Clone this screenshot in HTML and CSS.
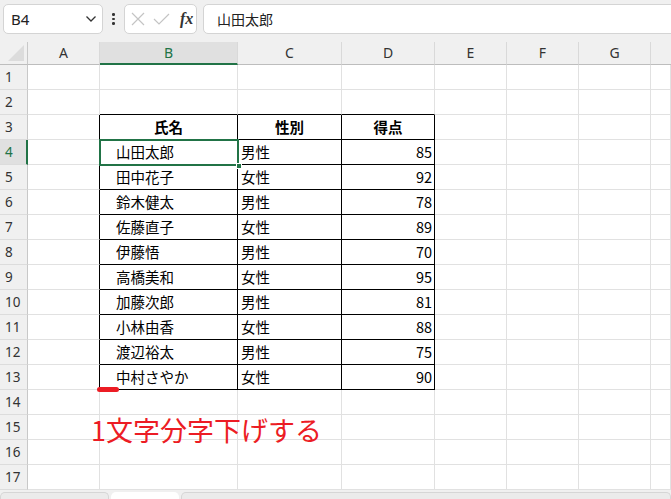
FILE: index.html
```html
<!DOCTYPE html>
<html lang="ja">
<head>
    <meta charset="UTF-8">
    <title>Book1 - Excel</title>
    <link rel="stylesheet" href="styles.css">
</head>
<body>
    <div class="formula-bar">
        <div class="name-box">
            <span>B4</span>
            <svg class="chevron" width="12" height="8" viewBox="0 0 12 8"><path d="M1.5 1.5 L6 6 L10.5 1.5" fill="none" stroke="#333" stroke-width="1.3"/></svg>
        </div>
        <div class="dots"><i></i><i></i><i></i></div>
        <div class="fx-box">
            <svg width="14" height="14" viewBox="0 0 14 14"><path d="M1 1 L13 13 M13 1 L1 13" stroke="#c4c4c4" stroke-width="1.2"/></svg>
            <svg width="17" height="14" viewBox="0 0 17 14"><path d="M1 7 L6 12 L16 2" fill="none" stroke="#c4c4c4" stroke-width="1.2"/></svg>
            <span class="fx">fx</span>
        </div>
        <div class="formula-input">山田太郎</div>
    </div>

    <div class="sheet">
        <div class="corner"><span class="tri"></span></div>
        <div class="col-head">A</div>
        <div class="col-head active">B</div>
        <div class="col-head">C</div>
        <div class="col-head">D</div>
        <div class="col-head">E</div>
        <div class="col-head">F</div>
        <div class="col-head">G</div>
        <div class="col-head last"></div>

        <div class="row-head">1</div><div class="c"></div><div class="c"></div><div class="c"></div><div class="c"></div><div class="c"></div><div class="c"></div><div class="c"></div><div class="c"></div>
        <div class="row-head">2</div><div class="c"></div><div class="c above"></div><div class="c above"></div><div class="c above"></div><div class="c"></div><div class="c"></div><div class="c"></div><div class="c"></div>

        <div class="row-head">3</div><div class="c before"></div><div class="c t th">氏名</div><div class="c t th">性別</div><div class="c t th">得点</div><div class="c"></div><div class="c"></div><div class="c"></div><div class="c"></div>
        <div class="row-head active">4</div><div class="c before"></div><div class="c t name">山田太郎</div><div class="c t">男性</div><div class="c t num">85</div><div class="c"></div><div class="c"></div><div class="c"></div><div class="c"></div>
        <div class="row-head">5</div><div class="c before"></div><div class="c t name">田中花子</div><div class="c t">女性</div><div class="c t num">92</div><div class="c"></div><div class="c"></div><div class="c"></div><div class="c"></div>
        <div class="row-head">6</div><div class="c before"></div><div class="c t name">鈴木健太</div><div class="c t">男性</div><div class="c t num">78</div><div class="c"></div><div class="c"></div><div class="c"></div><div class="c"></div>
        <div class="row-head">7</div><div class="c before"></div><div class="c t name">佐藤直子</div><div class="c t">女性</div><div class="c t num">89</div><div class="c"></div><div class="c"></div><div class="c"></div><div class="c"></div>
        <div class="row-head">8</div><div class="c before"></div><div class="c t name">伊藤悟</div><div class="c t">男性</div><div class="c t num">70</div><div class="c"></div><div class="c"></div><div class="c"></div><div class="c"></div>
        <div class="row-head">9</div><div class="c before"></div><div class="c t name">高橋美和</div><div class="c t">女性</div><div class="c t num">95</div><div class="c"></div><div class="c"></div><div class="c"></div><div class="c"></div>
        <div class="row-head">10</div><div class="c before"></div><div class="c t name">加藤次郎</div><div class="c t">男性</div><div class="c t num">81</div><div class="c"></div><div class="c"></div><div class="c"></div><div class="c"></div>
        <div class="row-head">11</div><div class="c before"></div><div class="c t name">小林由香</div><div class="c t">女性</div><div class="c t num">88</div><div class="c"></div><div class="c"></div><div class="c"></div><div class="c"></div>
        <div class="row-head">12</div><div class="c before"></div><div class="c t name">渡辺裕太</div><div class="c t">男性</div><div class="c t num">75</div><div class="c"></div><div class="c"></div><div class="c"></div><div class="c"></div>
        <div class="row-head">13</div><div class="c before"></div><div class="c t name">中村さやか</div><div class="c t">女性</div><div class="c t num">90</div><div class="c"></div><div class="c"></div><div class="c"></div><div class="c"></div>

        <div class="row-head">14</div><div class="c"></div><div class="c"></div><div class="c"></div><div class="c"></div><div class="c"></div><div class="c"></div><div class="c"></div><div class="c"></div>
        <div class="row-head">15</div><div class="c"></div><div class="c"></div><div class="c"></div><div class="c"></div><div class="c"></div><div class="c"></div><div class="c"></div><div class="c"></div>
        <div class="row-head">16</div><div class="c"></div><div class="c"></div><div class="c"></div><div class="c"></div><div class="c"></div><div class="c"></div><div class="c"></div><div class="c"></div>
        <div class="row-head">17</div><div class="c"></div><div class="c"></div><div class="c"></div><div class="c"></div><div class="c"></div><div class="c"></div><div class="c"></div><div class="c"></div>

        <!-- overlays -->
        <div class="selection"><span class="handle"></span></div>
        <div class="indent-mark"></div>
        <div class="note">1文字分字下げする</div>
    </div>

    <div class="tab-bar">
        <div class="tab-nav"></div>
        <div class="tab"></div>
        <div class="tab-rest"></div>
    </div>
</body>
</html>
```

FILE: styles.css
```css
* {
    box-sizing: border-box;
}

body {
    margin: 0;
    width: 671px;
    height: 499px;
    overflow: hidden;
    background-color: #f0f0f0;
    font-family: "Noto Sans CJK JP", "Noto Sans", sans-serif;
    color: #000;
}

/* formula bar */
.formula-bar {
    display: flex;
    align-items: center;
    height: 42px;
    padding: 4px 0 8px 3px;
}

.name-box,
.fx-box,
.formula-input {
    height: 30px;
    background-color: #fff;
    border: 1px solid #d4d4d4;
    border-radius: 5px;
    display: flex;
    align-items: center;
}

.name-box {
    width: 100px;
    justify-content: space-between;
    padding: 0 5px 0 7px;
    font-family: "Noto Sans", sans-serif;
    font-size: 15px;
    color: #222;
}

.dots {
    width: 21px;
    display: flex;
    flex-direction: column;
    align-items: center;
    gap: 2px;
}

.dots i {
    width: 2.5px;
    height: 2.5px;
    background-color: #333;
    border-radius: 50%;
}

.fx-box {
    width: 73px;
    gap: 8px;
    padding-left: 6px;
}

.fx {
    font-family: "Liberation Serif", serif;
    font-style: italic;
    font-weight: bold;
    font-size: 16px;
    color: #333;
    margin-left: 2px;
}

.formula-input {
    flex: 1;
    margin-left: 6px;
    margin-right: -12px;
    padding-left: 13px;
    font-size: 14px;
    color: #222;
}

/* grid */
.sheet {
    position: relative;
    display: grid;
    grid-template-columns: 28px 72px 138px 104px 93px 72px 72px 72px 1fr;
    grid-template-rows: 23px;
    grid-auto-rows: 25px;
    background-color: #fff;
    font-size: 14.5px;
}

.corner {
    background-color: #f0f0f0;
    border-right: 1px solid #c8c8c8;
    border-bottom: 1px solid #bdbdbd;
    position: relative;
}

.tri {
    position: absolute;
    right: 3px;
    bottom: 3px;
    width: 0;
    height: 0;
    border-left: 16px solid transparent;
    border-bottom: 16px solid #dcdcdc;
}

.col-head {
    background-color: #f0f0f0;
    border-right: 1px solid #d9d9d9;
    border-bottom: 1px solid #bdbdbd;
    text-align: center;
    font-family: "Noto Sans", sans-serif;
    font-size: 14px;
    line-height: 22px;
    color: #333;
}

.col-head.active {
    background-color: #e0e0e0;
    color: #217346;
    border-bottom: 2px solid #217346;
}

.col-head.last {
    border-right: none;
}

.row-head {
    background-color: #f0f0f0;
    border-right: 1px solid #c8c8c8;
    border-bottom: 1px solid #dcdcdc;
    font-family: "Noto Sans", sans-serif;
    font-size: 13.5px;
    color: #333;
    line-height: 24px;
    padding-left: 5px;
}

.row-head.active {
    background-color: #e0e0e0;
    color: #217346;
    border-right: 2px solid #217346;
}

.c {
    border-right: 1px solid #e1e1e1;
    border-bottom: 1px solid #e1e1e1;
    line-height: 24px;
    white-space: nowrap;
    overflow: hidden;
}

.c.above {
    border-bottom-color: #000;
}

.c.before {
    border-right-color: #000;
}

.c.t {
    border-right-color: #000;
    border-bottom-color: #000;
    padding: 0 3px;
}

.c.th {
    text-align: center;
    font-weight: bold;
}

.c.name {
    padding-left: 16px;
}

.c.num {
    text-align: right;
    padding-right: 2px;
}

/* selected cell B4 */
.selection {
    position: absolute;
    left: 99px;
    top: 97px;
    width: 140px;
    height: 27px;
    border: 2px solid #217346;
}

.handle {
    position: absolute;
    right: -5px;
    bottom: -5px;
    width: 6px;
    height: 6px;
    background-color: #217346;
    border: 1px solid #fff;
}

/* annotation */
.indent-mark {
    position: absolute;
    left: 97px;
    top: 345px;
    width: 22px;
    height: 5px;
    border-radius: 3px;
    background-color: #ec1c24;
}

.note {
    position: absolute;
    left: 91px;
    top: 370px;
    font-size: 27px;
    line-height: 36px;
    color: #ec1c24;
    white-space: nowrap;
}

/* sheet tabs */
.tab-bar {
    display: flex;
    height: 9px;
    padding-top: 2px;
    gap: 2px;
    background-color: #f0f0f0;
}

.tab-nav {
    width: 109px;
    background-color: #ebebeb;
    border: 1px solid #d6d6d6;
    border-bottom: none;
    border-radius: 5px 5px 0 0;
}

.tab {
    width: 68px;
    background-color: #fff;
    border-radius: 5px 5px 0 0;
}

.tab-rest {
    flex: 1;
    background-color: #ebebeb;
    border: 1px solid #d6d6d6;
    border-bottom: none;
    border-radius: 5px 5px 0 0;
}
```
